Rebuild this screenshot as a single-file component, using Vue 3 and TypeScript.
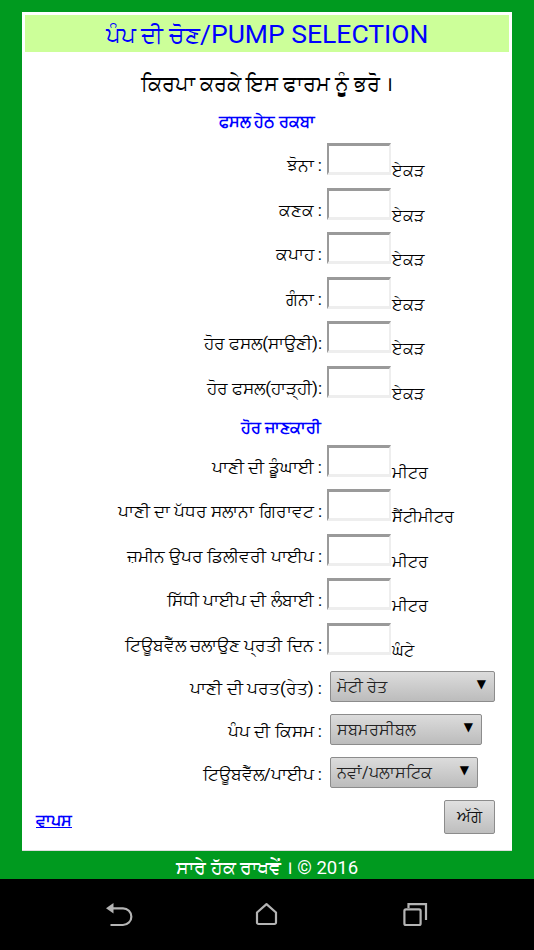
<script setup lang="ts">
interface Row { label: string; unit: string }
const crops: Row[] = [
  { label: 'ਝੋਨਾ :', unit: 'ਏਕੜ' },
  { label: 'ਕਣਕ :', unit: 'ਏਕੜ' },
  { label: 'ਕਪਾਹ :', unit: 'ਏਕੜ' },
  { label: 'ਗੰਨਾ :', unit: 'ਏਕੜ' },
  { label: 'ਹੋਰ ਫਸਲ(ਸਾਉਣੀ):', unit: 'ਏਕੜ' },
  { label: 'ਹੋਰ ਫਸਲ(ਹਾੜ੍ਹੀ):', unit: 'ਏਕੜ' },
]
const info: Row[] = [
  { label: 'ਪਾਣੀ ਦੀ ਡੂੰਘਾਈ :', unit: 'ਮੀਟਰ' },
  { label: 'ਪਾਣੀ ਦਾ ਪੱਧਰ ਸਲਾਨਾ ਗਿਰਾਵਟ :', unit: 'ਸੈਂਟੀਮੀਟਰ' },
  { label: 'ਜ਼ਮੀਨ ਉਪਰ ਡਿਲੀਵਰੀ ਪਾਈਪ :', unit: 'ਮੀਟਰ' },
  { label: 'ਸਿੱਧੀ ਪਾਈਪ ਦੀ ਲੰਬਾਈ :', unit: 'ਮੀਟਰ' },
  { label: 'ਟਿਊਬਵੈੱਲ ਚਲਾਉਣ ਪ੍ਰਤੀ ਦਿਨ :', unit: 'ਘੰਟੇ' },
]
const selects = [
  { label: 'ਪਾਣੀ ਦੀ ਪਰਤ(ਰੇਤ) :', value: 'ਮੋਟੀ ਰੇਤ', width: 165 },
  { label: 'ਪੰਪ ਦੀ ਕਿਸਮ :', value: 'ਸਬਮਰਸੀਬਲ', width: 152 },
  { label: 'ਟਿਊਬਵੈੱਲ/ਪਾਈਪ :', value: 'ਨਵਾਂ/ਪਲਾਸਟਿਕ', width: 148 },
]
</script>

<template>
  <div class="screen">
    <main class="page">
      <section class="card">
        <h1 class="title"><span class="title-pa">ਪੰਪ ਦੀ ਚੋਣ</span>/PUMP SELECTION</h1>
        <p class="intro">ਕਿਰਪਾ ਕਰਕੇ ਇਸ ਫਾਰਮ ਨੂੰ ਭਰੋ ।</p>
        <h2 class="heading first">ਫਸਲ ਹੇਠ ਰਕਬਾ</h2>
        <div class="rows">
          <div v-for="r in crops" :key="r.label" class="row">
            <span class="label">{{ r.label }}</span>
            <span class="input"></span>
            <span class="unit">{{ r.unit }}</span>
          </div>
        </div>
        <h2 class="heading second">ਹੋਰ ਜਾਣਕਾਰੀ</h2>
        <div class="rows">
          <div v-for="r in info" :key="r.label" class="row">
            <span class="label">{{ r.label }}</span>
            <span class="input"></span>
            <span class="unit">{{ r.unit }}</span>
          </div>
        </div>
        <div class="selects">
          <div v-for="s in selects" :key="s.label" class="select-row">
            <span class="label">{{ s.label }}</span>
            <span class="select" :style="{ width: s.width + 'px' }">
              <span>{{ s.value }}</span>
              <i class="arrow">▼</i>
            </span>
          </div>
        </div>
        <div class="actions">
          <a class="back" href="#">ਵਾਪਸ</a>
          <button class="next" type="button">ਅੱਗੇ</button>
        </div>
      </section>
      <footer class="footer">ਸਾਰੇ ਹੱਕ ਰਾਖਵੇਂ । © 2016</footer>
    </main>
    <nav class="navbar">
      <svg class="nav-icon" viewBox="0 0 30 30" aria-hidden="true">
        <path d="M8 9.300H19a8.350 8.350 0 0 1 0 16.700H6.500" fill="none" stroke="#b4b4b4" stroke-width="2.200" />
        <path d="M2 9.300 9.500 4v10.500Z" fill="#b4b4b4" />
      </svg>
      <svg class="nav-icon" viewBox="0 0 30 30" aria-hidden="true">
        <path d="M14.500 5.200 24 13.500v10a1.500 1.500 0 0 1-1.500 1.500h-16A1.500 1.500 0 0 1 5 23.500v-10Z" fill="none" stroke="#b4b4b4" stroke-width="2.200" stroke-linejoin="round" />
      </svg>
      <svg class="nav-icon" viewBox="0 0 30 30" aria-hidden="true">
        <path d="M8.500 9V5.100H26V21" fill="none" stroke="#b4b4b4" stroke-width="2.200" />
        <rect x="4.400" y="10.400" width="16.200" height="15.600" rx="1.500" fill="none" stroke="#b4b4b4" stroke-width="2.200" />
      </svg>
    </nav>
  </div>
</template>

<style scoped>
.screen {
  width: 534px;
  height: 950px;
  display: flex;
  flex-direction: column;
  font-family: Roboto, "Noto Sans", sans-serif;
  overflow: hidden;
}
.page {
  height: 879px;
  background: #009a1f;
  padding: 12px 22px 0;
  box-sizing: border-box;
  display: flex;
  flex-direction: column;
}
.card {
  height: 839px;
  flex: none;
  background: #fff;
  padding: 3px;
  box-sizing: border-box;
  border-bottom: 1px solid #ddd;
}
.title {
  margin: 0;
  height: 37px;
  background: #ccff99;
  color: #0000ff;
  font-size: 26.500px;
  font-weight: 400;
  line-height: 38px;
  text-align: center;
  white-space: nowrap;
}
.title-pa {
  font-size: 23px;
}
.intro {
  margin: 19px 0 0;
  font-size: 20.500px;
  line-height: 26px;
  text-align: center;
  color: #000;
}
.heading {
  margin: 0;
  color: #0000ff;
  font-size: 16px;
  line-height: 20px;
  font-weight: 700;
  text-align: center;
}
.heading.first { margin-top: 15px; }
.heading.second { margin-top: 20px; padding-left: 28px; }
.rows {
  display: flex;
  flex-direction: column;
  gap: 12.500px;
}
.heading.first + .rows { margin-top: 11px; }
.heading.second + .rows { margin-top: 7px; }
.row {
  display: grid;
  grid-template-columns: 297px 64px auto;
  column-gap: 5px;
  height: 32px;
  align-items: end;
}
.label {
  text-align: right;
  font-size: 17px;
  line-height: 22px;
  color: #000;
  white-space: nowrap;
}
.row .label {
  margin-bottom: -1px;
}
.input {
  width: 64px;
  height: 32px;
  box-sizing: border-box;
  border-style: solid;
  border-width: 3px 2px 3px 2px;
  border-color: #9a9a9a #eeeeee #eeeeee #9a9a9a;
  background: #fff;
}
.unit {
  font-size: 16px;
  line-height: 20px;
  margin-bottom: -6px;
  margin-left: -4px;
  white-space: nowrap;
}
.selects {
  margin-top: 16px;
  display: flex;
  flex-direction: column;
  gap: 12px;
}
.select-row {
  display: grid;
  grid-template-columns: 297px auto;
  column-gap: 8px;
  height: 31px;
  align-items: center;
}
.select-row .label {
  margin-top: 3px;
}
.select {
  height: 31px;
  box-sizing: border-box;
  border: 1px solid #8c8c8c;
  border-radius: 2px;
  background: linear-gradient(#dcdcdc, #bcbcbc);
  display: flex;
  align-items: center;
  justify-content: space-between;
  padding: 0 8px 0 6px;
  font-size: 16px;
  color: #222;
}
.arrow {
  font-style: normal;
  font-size: 12px;
  color: #000;
  margin-top: -4px;
  font-family: "DejaVu Sans", sans-serif;
}
.actions {
  display: flex;
  justify-content: space-between;
  align-items: flex-end;
  margin: 12px 14px 0 11px;
}
.back {
  color: #0000ff;
  font-size: 16px;
  font-weight: 700;
  text-decoration: underline;
  text-decoration-skip-ink: none;
  line-height: 20px;
  margin-bottom: 3px;
}
.next {
  width: 51px;
  height: 34px;
  box-sizing: border-box;
  padding: 0;
  border: 1px solid #8c8c8c;
  border-radius: 2px;
  background: linear-gradient(#e0e0e0, #bebebe);
  font-family: inherit;
  font-size: 16px;
  color: #111;
}
.footer {
  flex: 1;
  color: #fff;
  text-align: center;
  font-size: 18.500px;
  line-height: 34px;
  overflow: hidden;
}
.navbar {
  height: 71px;
  background: #000;
  display: flex;
  align-items: center;
  justify-content: center;
  gap: 118px;
}
.nav-icon {
  width: 30px;
  height: 30px;
  margin-top: -1px;
}
</style>
